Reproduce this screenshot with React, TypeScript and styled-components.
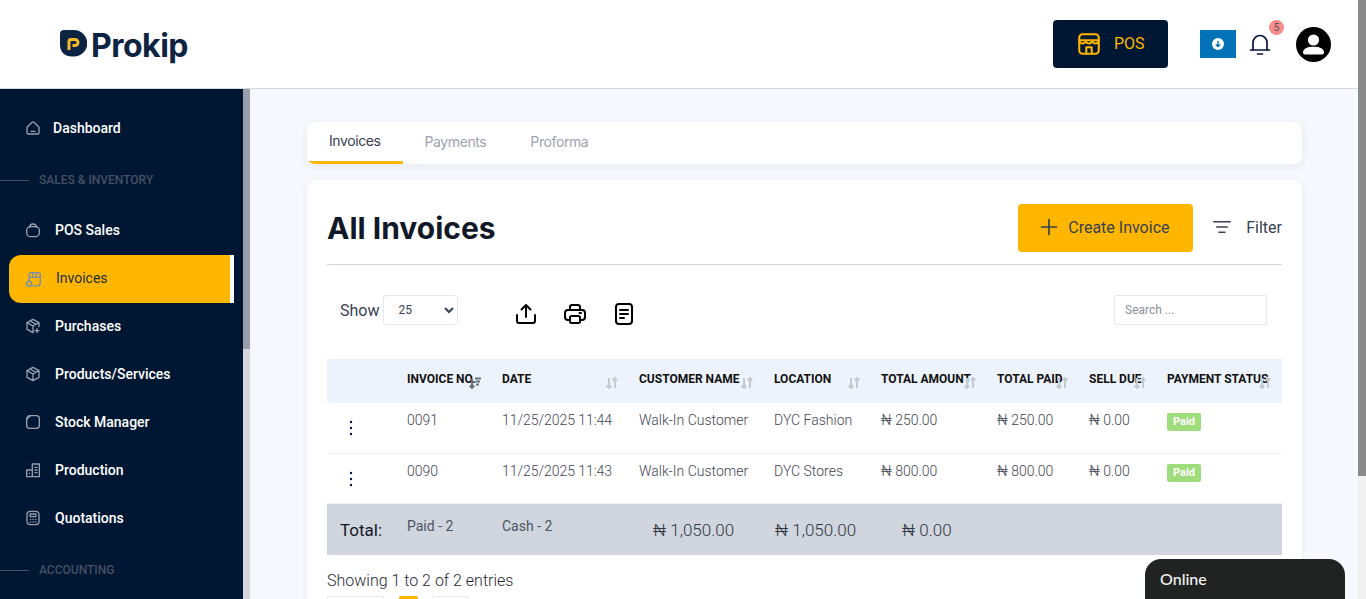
import styled, { createGlobalStyle } from "styled-components";
import { ReactNode } from "react";

const GlobalStyle = createGlobalStyle`
  html, body {
    margin: 0;
    padding: 0;
    height: 100%;
    overflow: hidden;
    font-family: Roboto, "Liberation Sans", sans-serif;
    background: #fff;
  }
  * { box-sizing: border-box; }
`;

const Page = styled.div`
  position: relative;
  display: flex;
  height: 100vh;
  overflow: hidden;
`;

const Content = styled.div`
  flex: 1;
  min-width: 0;
  display: flex;
  flex-direction: column;
`;

const Track = styled.div<{ $w: number; $bg: string }>`
  flex: none;
  width: ${(p) => p.$w}px;
  background: ${(p) => p.$bg};
`;

const Thumb = styled.div<{ $h: number; $bg: string }>`
  height: ${(p) => p.$h}px;
  background: ${(p) => p.$bg};
`;

const Header = styled.header`
  flex: none;
  height: 89px;
  display: flex;
  align-items: center;
  justify-content: space-between;
  padding: 0 27px 1px 60px;
  border-bottom: 1px solid #d5d8de;
  background: #fff;
`;

const Logo = styled.div`
  display: flex;
  align-items: center;
  gap: 4px;
`;

const LogoText = styled.span`
  padding-top: 4px;
  font-family: Inter, sans-serif;
  font-weight: 700;
  font-size: 32px;
  letter-spacing: -0.5px;
  color: #0d2342;
  line-height: 32px;
`;

const HeaderRight = styled.div`
  display: flex;
  align-items: center;
`;

const PosButton = styled.button`
  width: 115px;
  height: 48px;
  display: flex;
  align-items: center;
  gap: 12px;
  padding: 0 0 0 23px;
  border: 0;
  border-radius: 4px;
  background: #001733;
  color: #ffb600;
  font-family: Roboto, sans-serif;
  font-size: 16px;
`;

const DownloadButton = styled.button`
  width: 36px;
  height: 28px;
  margin-left: 32px;
  display: flex;
  align-items: center;
  justify-content: center;
  padding: 0;
  border: 0;
  background: #0272b8;
`;

const BellWrap = styled.div`
  position: relative;
  width: 22px;
  height: 24px;
  margin: 1px 0 0 12px;
  color: #0b1440;
`;

const BellBadge = styled.span`
  position: absolute;
  top: -12px;
  left: 21px;
  width: 15px;
  height: 15px;
  border-radius: 50%;
  background: #f98b8b;
  color: #4b5563;
  font-size: 10px;
  line-height: 15px;
  text-align: center;
`;

const Avatar = styled.div`
  width: 35px;
  height: 35px;
  margin: 2px 0 0 26px;
`;

const Body = styled.div`
  flex: 1;
  min-height: 0;
  display: flex;
`;

const Sidebar = styled.nav`
  flex: none;
  width: 243px;
  padding-top: 15px;
  background: #001733;
  overflow: hidden;
`;

const NavItem = styled.a<{ $active?: boolean; $gap?: number }>`
  display: flex;
  align-items: center;
  gap: ${(p) => p.$gap ?? 14}px;
  width: 225px;
  height: 48px;
  margin: ${(p) => (p.$active ? "1px 0 -1px 9px" : "0 0 0 9px")};
  padding-left: 16px;
  font-size: 14px;
  font-weight: ${(p) => (p.$active ? 400 : 500)};
  color: ${(p) => (p.$active ? "#22303f" : "#fff")};
  background: ${(p) => (p.$active ? "#ffb600" : "transparent")};
  border-right: ${(p) => (p.$active ? "4px solid #fff" : "0")};
  border-radius: ${(p) => (p.$active ? "12px 0 0 12px" : "0")};
  svg {
    flex: none;
    color: ${(p) => (p.$active ? "#7f8ea8" : "#98a0ae")};
  }
  span {
    position: relative;
    top: ${(p) => (p.$active ? "-1px" : "0")};
  }
`;

const NavSection = styled.div<{ $top: number; $bottom: number }>`
  display: flex;
  align-items: center;
  gap: 10px;
  height: 14px;
  margin: ${(p) => p.$top}px 0 ${(p) => p.$bottom}px;
  font-size: 12px;
  font-weight: 500;
  color: #465062;
  &::before {
    content: "";
    width: 29px;
    height: 1px;
    background: #465062;
  }
`;

const Main = styled.main`
  flex: 1;
  min-width: 0;
  padding: 33px 56px 0 57px;
  background: #f7f8fd;
  overflow: hidden;
`;

const TabsCard = styled.div`
  display: flex;
  height: 42px;
  margin-bottom: 16px;
  background: #fff;
  border-radius: 8px;
  box-shadow: 0 2px 8px rgba(30, 40, 80, 0.08);
  overflow: hidden;
`;

const Tab = styled.div<{ $active?: boolean }>`
  display: flex;
  align-items: center;
  height: 42px;
  padding: ${(p) => (p.$active ? "0 22px 2px" : "0 22px 0")};
  font-family: Inter, sans-serif;
  font-size: 14px;
  letter-spacing: -0.4px;
  color: ${(p) => (p.$active ? "#374151" : "#9ca3af")};
  border-bottom: 3px solid ${(p) => (p.$active ? "#ffb600" : "transparent")};
`;

const Card = styled.section`
  height: 460px;
  padding: 24px 20px 0;
  background: #fff;
  border-radius: 10px;
  box-shadow: 0 2px 8px rgba(30, 40, 80, 0.05);
`;

const TitleRow = styled.div`
  display: flex;
  align-items: center;
  justify-content: space-between;
  padding-bottom: 12px;
  border-bottom: 1px solid #d1d5db;
`;

const Title = styled.h1`
  margin: 0;
  font-family: Inter, sans-serif;
  font-size: 30px;
  font-weight: 700;
  color: #111827;
`;

const TitleActions = styled.div`
  display: flex;
  align-items: center;
`;

const CreateButton = styled.button`
  display: flex;
  align-items: center;
  gap: 10px;
  width: 175px;
  height: 48px;
  padding: 0 0 2px 22px;
  border: 0;
  border-radius: 4px;
  background: #ffb600;
  color: #374151;
  font-family: Roboto, sans-serif;
  font-size: 16px;
`;

const FilterButton = styled.div`
  display: flex;
  align-items: center;
  gap: 15px;
  margin-left: 20px;
  padding-bottom: 2px;
  font-size: 16px;
  color: #374151;
`;

const ToolRow = styled.div`
  display: flex;
  align-items: center;
  height: 30px;
  margin-top: 30px;
  padding: 0 15px 0 13px;
`;

const ShowLabel = styled.label`
  display: flex;
  align-items: center;
  gap: 4px;
  font-size: 16px;
  color: #374151;
`;

const ShowSelect = styled.select`
  width: 75px;
  height: 30px;
  padding-left: 10px;
  border: 1px solid #e5e7eb;
  border-radius: 3px;
  background: #fff;
  color: #374151;
  font-family: Roboto, sans-serif;
  font-size: 12px;
`;

const ExportIcons = styled.div`
  display: flex;
  gap: 25px;
  margin: 8px 0 0 56px;
  color: #000;
`;

const SearchInput = styled.input`
  width: 153px;
  height: 30px;
  margin-left: auto;
  padding: 0 10px;
  border: 1px solid #e5e7eb;
  border-radius: 2px;
  font-family: Roboto, sans-serif;
  font-size: 12px;
  &::placeholder {
    color: #8b919c;
  }
`;

const Table = styled.table`
  width: 955px;
  margin-top: 34px;
  border-collapse: collapse;
  table-layout: fixed;
`;

const HeadRow = styled.tr`
  height: 44px;
  background: #edf3fc;
`;

const Th = styled.th`
  position: relative;
  padding: 13px 0 0 10px;
  vertical-align: top;
  text-align: left;
  font-size: 12px;
  font-weight: 700;
  line-height: 14px;
  color: #111;
  white-space: nowrap;
`;

const SortSlot = styled.span`
  position: absolute;
  right: 11px;
  top: 18px;
  line-height: 0;
`;

const Row = styled.tr`
  height: 50px;
  border-bottom: 1px solid #f0f1f4;
`;

const Td = styled.td`
  padding: 8px 0 0 10px;
  vertical-align: top;
  font-size: 14px;
  font-weight: 300;
  line-height: 18px;
  color: #3f4652;
  white-space: nowrap;
`;

const DateCell = styled(Td)`
  letter-spacing: -0.04px;
`;

const MenuCell = styled.td`
  padding: 17px 0 0 16px;
  vertical-align: top;
  color: #0b1440;
  line-height: 0;
`;

const PaidBadge = styled.span`
  display: inline-block;
  width: 34px;
  height: 18px;
  margin-top: 1px;
  border-radius: 2px;
  background: #9fdc7c;
  color: #fff;
  font-size: 11px;
  font-weight: 700;
  line-height: 17px;
  text-align: center;
`;

const TotalRow = styled.tr`
  height: 52px;
  background: #d1d5dd;
  border-top: 1px solid #f0f1f4;
`;

const TotalLabel = styled.td`
  padding: 2px 0 0 13px;
  font-size: 17px;
  font-weight: 400;
  color: #111827;
`;

const TotalText = styled.td`
  padding: 13px 0 0 10px;
  vertical-align: top;
  font-size: 14px;
  line-height: 18px;
  color: #4b5563;
  white-space: nowrap;
`;

const TotalAmount = styled.td<{ $pad: number }>`
  padding: 2px 0 0 ${(p) => p.$pad}px;
  font-size: 17px;
  font-weight: 300;
  color: #2f3744;
  white-space: nowrap;
`;

const Entries = styled.div`
  margin-top: 16px;
  font-size: 16px;
  font-weight: 300;
  line-height: 20px;
  color: #1f2937;
`;

const Pager = styled.div`
  display: flex;
  gap: 15px;
  margin-top: 5px;
`;

const PageBox = styled.div<{ $w: number; $on?: boolean }>`
  width: ${(p) => p.$w}px;
  height: 30px;
  border: ${(p) => (p.$on ? "0" : "1px solid #e5e7eb")};
  border-radius: 2px;
  background: ${(p) => (p.$on ? "#ffb600" : "#fff")};
`;

const ChatTab = styled.div`
  position: absolute;
  left: 1145px;
  bottom: 0;
  width: 200px;
  height: 40px;
  padding: 10px 15px 0;
  border-radius: 16px 16px 0 0;
  background: #212322;
  color: #f2f2f2;
  font-family: Lato, sans-serif;
  font-size: 16px;
  font-weight: 500;
  line-height: 20px;
`;

function Stroke({ size, w = 1.6, children }: { size: number; w?: number; children: ReactNode }) {
  return (
    <svg
      width={size}
      height={size}
      viewBox="0 0 24 24"
      fill="none"
      stroke="currentColor"
      strokeWidth={w}
      strokeLinecap="round"
      strokeLinejoin="round"
    >
      {children}
    </svg>
  );
}

function ProkipMark() {
  return (
    <svg width="27" height="27" viewBox="0 0 27 27">
      <path d="M4 0 H14 A13 13 0 0 1 14 26.5 H12 C5 26.5 0 22 0 15 V4 A4 4 0 0 1 4 0 Z" fill="#0d2342" />
      <path d="M9 20 V11.5 A2 2 0 0 1 11 9.5 H15 A3 3 0 0 1 15 15.5 H12.5" fill="none" stroke="#f6b92b" strokeWidth="3" />
    </svg>
  );
}

function StoreIcon() {
  return (
    <Stroke size={26} w={1.9}>
      <rect x="3" y="3" width="18" height="18" rx="3" />
      <path d="M3 8.5 H21 M3 8.5 a3 3 0 0 0 6 0 a3 3 0 0 0 6 0 a3 3 0 0 0 6 0" />
      <path d="M9.5 21 V15 H14.5 V21" />
    </Stroke>
  );
}

function DownloadDot() {
  return (
    <svg width="12" height="12" viewBox="0 0 12 12">
      <circle cx="6" cy="6" r="6" fill="#fff" />
      <path d="M6 3 V8.5 M3.8 6.4 L6 8.6 L8.2 6.4" fill="none" stroke="#0272b8" strokeWidth="1.4" />
    </svg>
  );
}

function BellIcon() {
  return (
    <Stroke size={24} w={1.7}>
      <path d="M5 18 V10.5 a7 7 0 0 1 14 0 V18" />
      <path d="M2.5 18 H21.5 M9.5 22 H14.5" />
    </Stroke>
  );
}

function AvatarIcon() {
  return (
    <svg width="35" height="35" viewBox="0 0 35 35">
      <circle cx="17.5" cy="17.5" r="17.5" fill="#000" />
      <circle cx="17.5" cy="13" r="5.6" fill="#fff" />
      <path d="M7 25.5 C7 21 12.5 19.8 17.5 19.8 S28 21 28 25.5 A2 2 0 0 1 26 27.5 H9 A2 2 0 0 1 7 25.5 Z" fill="#fff" />
    </svg>
  );
}

function HomeIcon() {
  return (
    <Stroke size={16} w={2}>
      <path d="M3 11 L10.5 3.5 a2 2 0 0 1 3 0 L21 11 V19 a2 2 0 0 1 -2 2 H5 a2 2 0 0 1 -2 -2 Z" />
      <path d="M9 17 H15" />
    </Stroke>
  );
}

function BasketIcon() {
  return (
    <Stroke size={16} w={2}>
      <rect x="2.5" y="7" width="19" height="15" rx="6" />
      <path d="M7 8 a5 5 0 0 1 10 0" />
    </Stroke>
  );
}

function InvoicesIcon() {
  return (
    <Stroke size={17} w={2}>
      <path d="M6 14 V5 a2.5 2.5 0 0 1 2.5 -2.5 H19 A2.5 2.5 0 0 1 21.5 5 V17 a4 4 0 0 1 -4 4 H11" />
      <path d="M6 9 H21.5 M11 3 V9 M16 3 V9" />
      <circle cx="6" cy="18" r="3.5" />
    </Stroke>
  );
}

function BoxPlusIcon() {
  return (
    <Stroke size={16} w={2}>
      <path d="M12 2 L21 7 V13 M12 2 L3 7 V17 L12 22 V12 M3 7 L12 12 L21 7 M7.5 4.5 L16.5 9.5" />
      <path d="M18 16 V22 M15 19 H21" />
    </Stroke>
  );
}

function BoxIcon() {
  return (
    <Stroke size={16} w={2}>
      <path d="M12 2 L21 7 V17 L12 22 L3 17 V7 Z M3 7 L12 12 L21 7 M12 12 V22 M7.5 4.5 L16.5 9.5" />
    </Stroke>
  );
}

function StockIcon() {
  return (
    <Stroke size={16} w={2}>
      <path d="M8 2.5 H17 A4.5 4.5 0 0 1 21.5 7 V17 A4.5 4.5 0 0 1 17 21.5 H7 A4.5 4.5 0 0 1 2.5 17 V8 Z" />
      <path d="M8 2.5 A5 5 0 0 0 2.5 8" />
    </Stroke>
  );
}

function BuildingIcon() {
  return (
    <Stroke size={16} w={2}>
      <path d="M2.5 22 H21.5 V3 H11 V22 M2.5 22 V12 H11 M6.5 17 H7 M15 8 H18 M15 12 H18 M15 16 H18" />
    </Stroke>
  );
}

function CalculatorIcon() {
  return (
    <Stroke size={16} w={2}>
      <rect x="3" y="2" width="18" height="20" rx="5" />
      <rect x="7.5" y="6" width="9" height="4" rx="1" />
      <path d="M8 14 H8.5 M12 14 H12.5 M16 14 H16.5 M8 18 H8.5 M12 18 H12.5 M16 18 H16.5" />
    </Stroke>
  );
}

function ShareIcon() {
  return (
    <Stroke size={24} w={2}>
      <path d="M12 15 V3 M7.5 7.5 L12 3 L16.5 7.5" />
      <path d="M3 13 V19 a2 2 0 0 0 2 2 H19 a2 2 0 0 0 2 -2 V13" />
    </Stroke>
  );
}

function PrintIcon() {
  return (
    <Stroke size={24} w={2}>
      <path d="M7 8 V5 a2 2 0 0 1 2 -2 H15 a2 2 0 0 1 2 2 V8" />
      <path d="M7 18 H5 a3 3 0 0 1 -3 -3 V11 a3 3 0 0 1 3 -3 H19 a3 3 0 0 1 3 3 V15 a3 3 0 0 1 -3 3 H17" />
      <rect x="7" y="14" width="10" height="7" rx="1.5" />
      <path d="M16.5 11 H18" />
    </Stroke>
  );
}

function NoteIcon() {
  return (
    <Stroke size={24} w={2}>
      <rect x="4" y="2" width="16" height="20" rx="3" />
      <path d="M8 8 H16 M8 12 H16 M8 16 H12" />
    </Stroke>
  );
}

function SortArrows({ active }: { active?: boolean }) {
  if (active) {
    return (
      <svg width="12" height="12" viewBox="0 0 12 12" fill="none" stroke="#6b7280" strokeWidth="2">
        <path d="M3 2 V11 M0.8 8.5 L3 11 L5.2 8.5" />
        <path d="M6 1.5 H12 M6.5 4.5 H11 M7 7.5 H10" />
      </svg>
    );
  }
  return (
    <svg width="12" height="12" viewBox="0 0 12 12" fill="none" stroke="#c5c9d0" strokeWidth="2">
      <path d="M3 1 V11 M0.8 8.5 L3 11 L5.2 8.5" />
      <path d="M9 11 V1 M6.8 3.5 L9 1 L11.2 3.5" />
    </svg>
  );
}

function KebabIcon() {
  return (
    <svg width="16" height="16" viewBox="0 0 16 16" fill="currentColor">
      <circle cx="8" cy="2" r="1.2" />
      <circle cx="8" cy="8" r="1.2" />
      <circle cx="8" cy="14" r="1.2" />
    </svg>
  );
}

const columns = [
  { label: "", width: 70 },
  { label: "INVOICE NO.", width: 95, active: true },
  { label: "DATE", width: 137 },
  { label: "CUSTOMER NAME", width: 135 },
  { label: "LOCATION", width: 107 },
  { label: "TOTAL AMOUNT", width: 116 },
  { label: "TOTAL PAID", width: 92 },
  { label: "SELL DUE", width: 78 },
  { label: "PAYMENT STATUS", width: 125 },
];

const invoices = [
  { no: "0091", date: "11/25/2025 11:44", location: "DYC Fashion", total: "₦ 250.00", paid: "₦ 250.00" },
  { no: "0090", date: "11/25/2025 11:43", location: "DYC Stores", total: "₦ 800.00", paid: "₦ 800.00" },
];

export default function App() {
  return (
    <Page>
      <GlobalStyle />
      <Content>
        <Header>
          <Logo>
            <ProkipMark />
            <LogoText>Prokip</LogoText>
          </Logo>
          <HeaderRight>
            <PosButton>
              <StoreIcon />
              POS
            </PosButton>
            <DownloadButton>
              <DownloadDot />
            </DownloadButton>
            <BellWrap>
              <BellIcon />
              <BellBadge>5</BellBadge>
            </BellWrap>
            <Avatar>
              <AvatarIcon />
            </Avatar>
          </HeaderRight>
        </Header>
        <Body>
          <Sidebar>
            <NavItem $gap={12}>
              <HomeIcon />
              <span>Dashboard</span>
            </NavItem>
            <NavSection $top={21} $bottom={19}>SALES &amp; INVENTORY</NavSection>
            <NavItem><BasketIcon /><span>POS Sales</span></NavItem>
            <NavItem $active>
              <InvoicesIcon />
              <span>Invoices</span>
            </NavItem>
            <NavItem><BoxPlusIcon /><span>Purchases</span></NavItem>
            <NavItem><BoxIcon /><span>Products/Services</span></NavItem>
            <NavItem><StockIcon /><span>Stock Manager</span></NavItem>
            <NavItem><BuildingIcon /><span>Production</span></NavItem>
            <NavItem><CalculatorIcon /><span>Quotations</span></NavItem>
            <NavSection $top={21} $bottom={19}>ACCOUNTING</NavSection>
          </Sidebar>
          <Track $w={7} $bg="#d2d5dc">
            <Thumb $h={260} $bg="#9a9fac" />
          </Track>
          <Main>
            <TabsCard>
              <Tab $active>Invoices</Tab>
              <Tab>Payments</Tab>
              <Tab>Proforma</Tab>
            </TabsCard>
            <Card>
              <TitleRow>
                <Title>All Invoices</Title>
                <TitleActions>
                  <CreateButton>
                    <Stroke size={18} w={2.2}><path d="M12 2 V22 M2 12 H22" /></Stroke>
                    Create Invoice
                  </CreateButton>
                  <FilterButton>
                    <Stroke size={18} w={2}><path d="M1 5 H23 M5 12 H19 M8 19 H16" /></Stroke>
                    Filter
                  </FilterButton>
                </TitleActions>
              </TitleRow>
              <ToolRow>
                <ShowLabel>
                  Show
                  <ShowSelect defaultValue="25">
                    <option>25</option>
                    <option>50</option>
                    <option>100</option>
                  </ShowSelect>
                </ShowLabel>
                <ExportIcons>
                  <ShareIcon />
                  <PrintIcon />
                  <NoteIcon />
                </ExportIcons>
                <SearchInput placeholder="Search ..." />
              </ToolRow>
              <Table>
                <colgroup>
                  {columns.map((c) => (
                    <col key={c.label} width={c.width} />
                  ))}
                </colgroup>
                <thead>
                  <HeadRow>
                    {columns.map((c) => (
                      <Th key={c.label}>
                        {c.label}
                        {c.label && (
                          <SortSlot>
                            <SortArrows active={c.active} />
                          </SortSlot>
                        )}
                      </Th>
                    ))}
                  </HeadRow>
                </thead>
                <tbody>
                  {invoices.map((inv) => (
                    <Row key={inv.no}>
                      <MenuCell><KebabIcon /></MenuCell>
                      <Td>{inv.no}</Td>
                      <DateCell>{inv.date}</DateCell>
                      <Td>Walk-In Customer</Td>
                      <Td>{inv.location}</Td>
                      <Td>{inv.total}</Td>
                      <Td>{inv.paid}</Td>
                      <Td>₦ 0.00</Td>
                      <Td><PaidBadge>Paid</PaidBadge></Td>
                    </Row>
                  ))}
                  <TotalRow>
                    <TotalLabel>Total:</TotalLabel>
                    <TotalText>Paid - 2</TotalText>
                    <TotalText>Cash - 2</TotalText>
                    <TotalAmount $pad={24}>₦ 1,050.00</TotalAmount>
                    <TotalAmount $pad={11}>₦ 1,050.00</TotalAmount>
                    <TotalAmount $pad={31}>₦ 0.00</TotalAmount>
                    <td colSpan={3} />
                  </TotalRow>
                </tbody>
              </Table>
              <Entries>Showing 1 to 2 of 2 entries</Entries>
              <Pager>
                <PageBox $w={57} />
                <PageBox $w={19} $on />
                <PageBox $w={36} />
              </Pager>
            </Card>
          </Main>
        </Body>
      </Content>
      <Track $w={8} $bg="#f1f1f1">
        <Thumb $h={476} $bg="#8a8a8a" />
      </Track>
      <ChatTab>Online</ChatTab>
    </Page>
  );
}
